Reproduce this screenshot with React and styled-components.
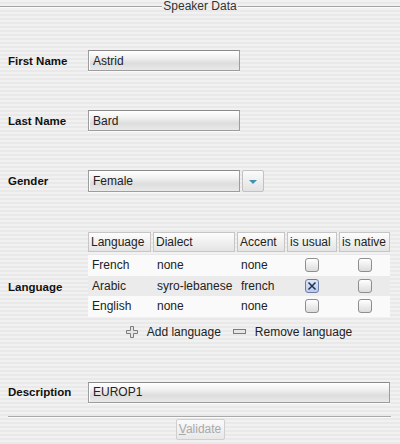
import React from "react";
import styled, { createGlobalStyle } from "styled-components";

const GlobalStyle = createGlobalStyle`
  html, body {
    margin: 0;
    padding: 0;
  }
  body {
    font-family: "Liberation Sans", Arial, sans-serif;
    font-size: 12px;
    color: #222;
  }
`;

const Page = styled.div`
  width: 400px;
  height: 444px;
  overflow: hidden;
  box-sizing: border-box;
  background: repeating-linear-gradient(
    to bottom,
    #f1f1f1 0px,
    #f1f1f1 2px,
    #e9e9e9 2px,
    #e9e9e9 4px
  );
  display: flex;
  flex-direction: column;
`;

const TitleBar = styled.div`
  height: 13px;
  display: flex;
  align-items: center;
  gap: 1px;
`;

const TitleLine = styled.div`
  flex: 1;
  height: 0;
  border-top: 1px solid #a4a4a4;
  box-shadow: 0 1px 0 #fbfbfb;
`;

const Title = styled.span`
  font-size: 12px;
  color: #333;
  line-height: 13px;
`;

const Form = styled.div`
  display: flex;
  flex-direction: column;
  padding: 0 10px 0 8px;
`;

const Row = styled.div`
  display: flex;
  align-items: center;
  margin-top: ${(p) => p.$top}px;
`;

const Label = styled.div`
  width: 80px;
  flex: none;
  font-size: 11.5px;
  font-weight: bold;
  color: #111;
`;

const TextField = styled.div`
  box-sizing: border-box;
  width: ${(p) => p.$width}px;
  height: ${(p) => p.$height || 21}px;
  border: 1px solid #9d9d9d;
  border-top-color: #8a8a8a;
  box-shadow: inset 1px 1px 0 #fff, 0 1px 0 #fafafa;
  background: linear-gradient(
    to bottom,
    #ffffff 0%,
    #f1f1f1 35%,
    #dddddd 65%,
    #e9e9e9 100%
  );
  padding: 0 4px;
  display: flex;
  align-items: center;
  font-size: 12px;
  color: #222;
`;

const ComboButton = styled.div`
  box-sizing: border-box;
  width: 22px;
  height: 22px;
  margin-left: 2px;
  border: 1px solid #c2c2c2;
  border-radius: 2px;
  background: linear-gradient(to bottom, #fbfbfb, #e2e2e2);
  display: flex;
  align-items: center;
  justify-content: center;
`;

const Arrow = styled.div`
  width: 0;
  height: 0;
  border-left: 4px solid transparent;
  border-right: 4px solid transparent;
  border-top: 4px solid #3f93b0;
  margin-top: 1px;
`;

const LangBlock = styled.div`
  display: flex;
  flex-direction: column;
  width: 302px;
`;

const Grid = styled.div`
  display: grid;
  grid-template-columns: 63px 82px 48px 50px 51px;
  column-gap: 2px;
  height: ${(p) => p.$height}px;
  background: ${(p) => p.$bg || "transparent"};
  align-items: center;
`;

const HeadCell = styled.div`
  box-sizing: border-box;
  height: 20px;
  border: 1px solid #c6c6c6;
  background: linear-gradient(to bottom, #fdfdfd, #e4e4e4);
  padding: 0 2px;
  display: flex;
  align-items: center;
  font-size: 12px;
  color: #222;
  white-space: nowrap;
  overflow: hidden;
`;

const Body = styled.div`
  margin-top: 3px;
  background: #fafafa;
`;

const Cell = styled.div`
  padding-left: ${(p) => (p.$center ? 0 : 4)}px;
  display: flex;
  align-items: center;
  justify-content: ${(p) => (p.$center ? "center" : "flex-start")};
  font-size: 12px;
  color: #222;
  white-space: nowrap;
`;

const Check = styled.div`
  box-sizing: border-box;
  width: 14px;
  height: 14px;
  border-radius: 3px;
  border: 1px solid ${(p) => (p.$on ? "#6a7ea8" : "#8e8e8e")};
  background: ${(p) =>
    p.$on
      ? "linear-gradient(to bottom, #dfe6f6, #bccaea)"
      : "linear-gradient(to bottom, #ffffff, #dcdcdc)"};
  display: flex;
  align-items: center;
  justify-content: center;
`;

const Actions = styled.div`
  display: flex;
  justify-content: center;
  align-items: center;
  height: 22px;
  margin-top: 4px;
`;

const ActionButton = styled.div`
  display: flex;
  align-items: center;
  gap: 9px;
  margin: 0 6px;
  font-size: 12px;
  color: #222;
`;

const Separator = styled.div`
  margin: 13px 9px 0 8px;
  height: 0;
  border-top: 1px solid #a9a9a9;
  box-shadow: 0 1px 0 #fbfbfb;
`;

const Footer = styled.div`
  display: flex;
  justify-content: center;
  margin-top: 2px;
`;

const Button = styled.div`
  box-sizing: border-box;
  width: 49px;
  height: 21px;
  border: 1px solid #cfcfcf;
  border-radius: 2px;
  background: linear-gradient(to bottom, #fafafa, #e8e8e8);
  color: #a9a9a9;
  font-size: 12px;
  display: flex;
  align-items: center;
  justify-content: center;

  u {
    text-decoration: underline;
  }
`;

const PlusIcon = () => (
  <svg width="12" height="12" viewBox="0 0 12 12">
    <path
      d="M4.5 0.5h3v4h4v3h-4v4h-3v-4h-4v-3h4z"
      fill="#e6e6e6"
      stroke="#7c7c7c"
      strokeWidth="1"
    />
  </svg>
);

const MinusIcon = () => (
  <svg width="13" height="5" viewBox="0 0 13 5">
    <rect x="0.5" y="0.5" width="12" height="4" fill="#e6e6e6" stroke="#7c7c7c" />
  </svg>
);

const CrossMark = () => (
  <svg width="10" height="10" viewBox="0 0 10 10">
    <path d="M1.5 1.5L8.5 8.5M8.5 1.5L1.5 8.5" stroke="#1f2f55" strokeWidth="1.5" />
  </svg>
);

const languages = [
  { language: "French", dialect: "none", accent: "none", usual: false, native: false },
  { language: "Arabic", dialect: "syro-lebanese", accent: "french", usual: true, native: false },
  { language: "English", dialect: "none", accent: "none", usual: false, native: false },
];

const headers = ["Language", "Dialect", "Accent", "is usual", "is native"];

export default function App() {
  return (
    <Page>
      <GlobalStyle />
      <TitleBar>
        <TitleLine />
        <Title>Speaker Data</Title>
        <TitleLine />
      </TitleBar>
      <Form>
        <Row $top={37}>
          <Label>First Name</Label>
          <TextField $width={152}>Astrid</TextField>
        </Row>
        <Row $top={39}>
          <Label>Last Name</Label>
          <TextField $width={152}>Bard</TextField>
        </Row>
        <Row $top={39}>
          <Label>Gender</Label>
          <TextField $width={152} $height={22}>Female</TextField>
          <ComboButton>
            <Arrow />
          </ComboButton>
        </Row>
        <Row $top={40}>
          <Label>Language</Label>
          <LangBlock>
            <Grid $height={20}>
              {headers.map((h) => (
                <HeadCell key={h}>{h}</HeadCell>
              ))}
            </Grid>
            <Body>
              {languages.map((l, i) => (
                <Grid key={l.language} $height={20.5} $bg={i % 2 === 1 ? "#ebebeb" : "#fafafa"}>
                  <Cell>{l.language}</Cell>
                  <Cell>{l.dialect}</Cell>
                  <Cell>{l.accent}</Cell>
                  <Cell $center>
                    <Check $on={l.usual}>{l.usual && <CrossMark />}</Check>
                  </Cell>
                  <Cell $center>
                    <Check $on={l.native}>{l.native && <CrossMark />}</Check>
                  </Cell>
                </Grid>
              ))}
            </Body>
            <Actions>
              <ActionButton>
                <PlusIcon />
                Add language
              </ActionButton>
              <ActionButton>
                <MinusIcon />
                Remove language
              </ActionButton>
            </Actions>
          </LangBlock>
        </Row>
        <Row $top={39}>
          <Label>Description</Label>
          <TextField $width={302}>EUROP1</TextField>
        </Row>
      </Form>
      <Separator />
      <Footer>
        <Button>
          <span>
            <u>V</u>alidate
          </span>
        </Button>
      </Footer>
    </Page>
  );
}
